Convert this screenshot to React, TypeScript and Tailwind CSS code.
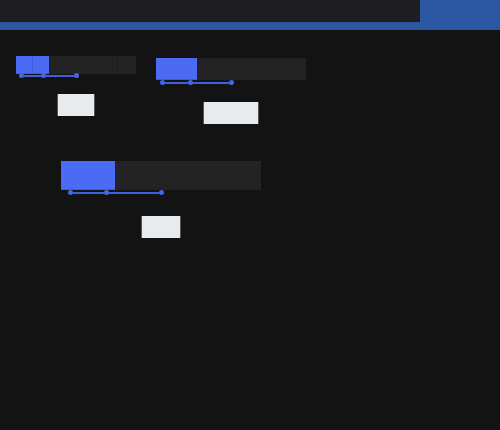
import React from "react";

function Dot() {
  return <div className="w-[5px] h-[5px] rounded-full bg-[#4367e8] flex-none" />;
}

export default function App() {
  return (
    <div className="w-[500px] h-[430px] bg-[#131313] overflow-hidden flex flex-col">
      <div className="h-[30px] bg-[#2b56a1] flex-none">
        <div className="w-[420px] h-[22px] bg-[#1e1d22]" />
      </div>
      <div className="relative flex-1">
        {/* widget 1 */}
        <div className="absolute left-[16px] top-[26px] flex flex-col">
          <div className="flex w-[120px] h-[18px] bg-[#232323]">
            <div className="flex w-[33px] h-full border-b border-[#3e5cd6]">
              <div className="w-[17px] h-full bg-[#4b6bf5] border-r border-[#3f5fd8]" />
              <div className="flex-1 h-full bg-[#4b6bf5]" />
            </div>
            <div className="w-[69px] h-full border-r border-[#1d1d1d]" />
          </div>
          <div className="-mt-px ml-[3px] flex items-center h-[5px]">
            <Dot />
            <div className="w-[17px] h-[2px] bg-[#3d60dd]" />
            <Dot />
            <div className="w-[28px] h-[2px] bg-[#3d60dd]" />
            <Dot />
          </div>
          <div className="mt-[16px] ml-[41px] w-[38px] h-[22px] bg-[#e8ebee] border-x border-[#555555]" />
        </div>

        {/* widget 2 */}
        <div className="absolute left-[156px] top-[28px] flex flex-col">
          <div className="flex w-[150px] h-[22px] bg-[#232323]">
            <div className="w-[41px] h-full bg-[#4b6bf5] border-b border-[#3e5cd6]" />
          </div>
          <div className="ml-[4px] flex items-center h-[5px]">
            <Dot />
            <div className="w-[23px] h-[2px] bg-[#3d60dd]" />
            <Dot />
            <div className="w-[36px] h-[2px] bg-[#3d60dd]" />
            <Dot />
          </div>
          <div className="mt-[17px] ml-[47px] w-[56px] h-[22px] bg-[#e8ebee] border-x border-[#555555]" />
        </div>

        {/* widget 3 */}
        <div className="absolute left-[61px] top-[131px] flex flex-col">
          <div className="flex w-[200px] h-[29px] bg-[#232323]">
            <div className="w-[54px] h-full bg-[#4b6bf5] border-b border-[#3e5cd6]" />
          </div>
          <div className="ml-[7px] flex items-center h-[5px]">
            <Dot />
            <div className="w-[31px] h-[2px] bg-[#3d60dd]" />
            <Dot />
            <div className="w-[50px] h-[2px] bg-[#3d60dd]" />
            <Dot />
          </div>
          <div className="mt-[21px] ml-[80px] w-[40px] h-[22px] bg-[#e8ebee] border-x border-[#555555]" />
        </div>
      </div>
    </div>
  );
}
